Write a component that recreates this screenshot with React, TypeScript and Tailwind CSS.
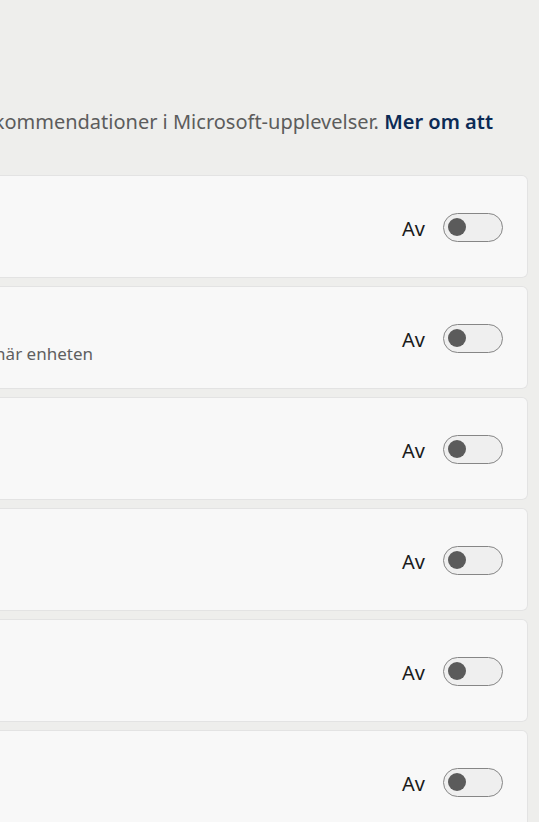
import React from 'react';

type Row = { title: string; desc?: string };

const rows: Row[] = [
  { title: 'Låt appar visa anpassade annonser genom att använda mitt annons-ID' },
  { title: 'Förbättra Start och sökresultat', desc: 'Låt Windows spåra appstarter när enheten' },
  { title: 'Visa föreslaget innehåll i appen Inställningar' },
  { title: 'Visa meddelanden i appen Inställningar' },
  { title: 'Anpassade erbjudanden' },
  { title: 'Rekommendationer och erbjudanden i Inställningar' },
];

function Toggle() {
  return (
    <div className="flex h-[29px] w-[60px] items-center rounded-full border-[1.5px] border-[#868686] bg-[#efefef] pl-[4px]">
      <span className="h-[18px] w-[18px] rounded-full bg-[#5b5b5b]" />
    </div>
  );
}

export default function App() {
  return (
    <div
      className="h-[822px] w-[539px] overflow-hidden bg-[#eeeeec] text-[#1b1b1b]"
      style={{ fontFamily: '"Noto Sans", "Open Sans", sans-serif' }}
    >
      {/* intro text, its start lies left of the window */}
      <div className="flex h-[175px] justify-end pr-[46px] pt-[105px]">
        <p className="whitespace-nowrap text-[20px] leading-[34px] text-[#5c5c5c]">
          Styr vilken information som används för tips, annonser och rekommendationer i Microsoft-upplevelser.{' '}
          <span className="font-semibold text-[#0b2a55]">Mer om att</span>
        </p>
      </div>

      <div className="mr-[11px] flex flex-col gap-[8px]">
        {rows.map((r) => (
          <div
            key={r.title}
            className="flex h-[103px] items-center rounded-r-[6px] border border-l-0 border-[#e3e3e3] bg-[#f8f8f8] pr-[24px]"
          >
            <div className="flex w-[300px] flex-col items-end overflow-visible">
              {r.desc && (
                <>
                  <p className="invisible whitespace-nowrap text-[20px] leading-[30px]">{r.title}</p>
                  <p className="mr-[207px] mt-[2px] whitespace-nowrap text-[17px] leading-[24px] text-[#5f5f5f]">
                    {r.desc}
                  </p>
                </>
              )}
            </div>
            <div className="ml-auto flex items-center gap-[18px] pt-[1px]">
              <span className="mt-[3px] text-[20px] leading-none text-[#1b1b1b]">Av</span>
              <Toggle />
            </div>
          </div>
        ))}
      </div>
    </div>
  );
}
